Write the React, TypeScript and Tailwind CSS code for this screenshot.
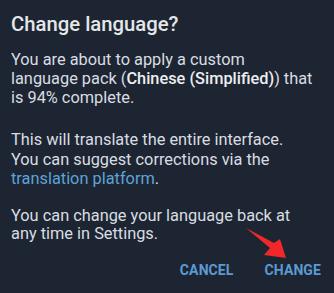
export default function App() {
  return (
    <div className="relative w-[334px] h-[293px] overflow-hidden bg-[#1d2532] font-['Roboto',sans-serif] text-[#d9dde2]">
      <div className="pl-[11px] pr-3 pt-[12px]">
        <h1 className="text-[20.3px] leading-[24px] font-medium text-[#e4e7ea]">Change language?</h1>
        <p className="mt-[14px] text-[16.35px] leading-[19px] whitespace-nowrap">
          You are about to apply a custom
          <br />
          language pack (<span className="font-medium text-[#eceef0]">Chinese (Simplified)</span>) that
          <br />
          is 94% complete.
        </p>
        <p className="mt-[23px] text-[16.35px] leading-[19.5px] whitespace-nowrap">
          This will translate the entire interface.
          <br />
          You can suggest corrections via the
          <br />
          <span className="text-[#5ea3d8]">translation platform</span>.
        </p>
        <p className="mt-[18px] text-[16.35px] leading-[18.5px] whitespace-nowrap">
          You can change your language back at
          <br />
          any time in Settings.
        </p>
        <div className="mt-[18px] flex justify-end gap-[31px] pr-[1px] text-[14px] leading-[16px] font-bold tracking-[0.1px] text-[#5b9ad2]">
          <span>CANCEL</span>
          <span>CHANGE</span>
        </div>
      </div>
      <svg className="absolute left-0 top-0" width="334" height="293" viewBox="0 0 334 293">
        <polygon points="246,228 274,243 280,239 286,258 264,255 270,248" fill="#f0282a" />
      </svg>
    </div>
  );
}
